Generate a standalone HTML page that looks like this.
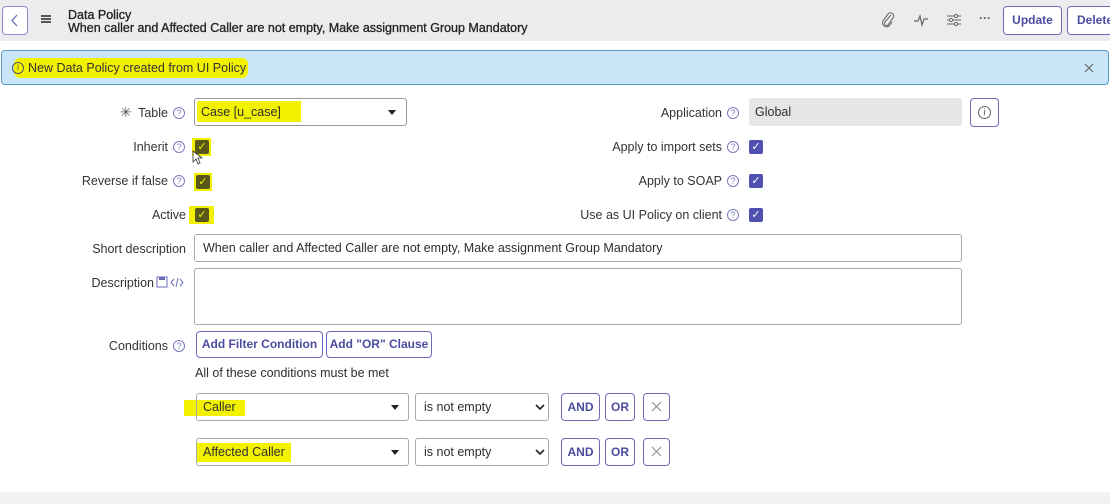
<!DOCTYPE html>
<html><head><meta charset="utf-8"><style>
*{box-sizing:border-box;margin:0;padding:0}
body{width:1110px;height:504px;background:#fff;font-family:"Liberation Sans",sans-serif;font-size:12.5px;color:#2e2e2e;position:relative;overflow:hidden}
.a{position:absolute}
.hdr{left:0;top:0;width:1110px;height:41px;background:#ececee}
.btn{position:absolute;border:1px solid #6b6bb5;border-radius:4px;background:#fff;color:#4b4ba0;font-weight:bold;text-align:center;font-size:12px}
.lbl{position:absolute;text-align:right;font-size:12.5px;color:#333}
.help{position:absolute;width:12px;height:12px;border:1px solid #7c7cc0;border-radius:50%;font-size:9px;color:#7c7cc0;text-align:center;line-height:10px}
.inp{position:absolute;border:1px solid #aaa;border-radius:3px;background:#fff;padding-left:8px;font-size:12.5px}
.cb{position:absolute;width:14px;height:14px;background:#5050b0;border-radius:2px;color:#fff;font-size:11px;text-align:center;line-height:14px}
.cby{position:absolute;background:#f0f000}
.cbd{position:absolute;width:14px;height:14px;background:#58561a;border-radius:2px;color:#f0f000;font-size:11px;text-align:center;line-height:14px}
.hl{background:#f2f200}
.car{position:absolute;width:0;height:0;border-left:4px solid transparent;border-right:4px solid transparent;border-top:5px solid #222}
</style></head><body>
<div class="a hdr"></div>
<div class="btn" style="left:2px;top:6px;width:26px;height:29px;border-color:#8a8acc"><svg width="24" height="27"><path d="M14 8 L9 13.5 L14 19" stroke="#6a6ab8" stroke-width="1.3" fill="none"/></svg></div>
<div class="a" style="left:41px;top:15px;width:10px;height:1.5px;background:#555;box-shadow:0 3px 0 #555,0 6px 0 #555"></div>
<div class="a" style="left:68px;top:8px;font-size:12.5px;color:#222;-webkit-text-stroke:0.3px #222">Data Policy</div>
<div class="a" style="left:68px;top:21px;font-size:12.5px;color:#222;-webkit-text-stroke:0.3px #222">When caller and Affected Caller are not empty, Make assignment Group Mandatory</div>
<svg class="a" style="left:878px;top:10px" width="20" height="20"><path d="M13 5 L7 12 a2 2 0 0 0 3 3 L15 8 a3.2 3.2 0 0 0 -5 -4 L5 11 a4 4 0 0 0 6 5 L14 12" stroke="#777" stroke-width="1.2" fill="none"/></svg>
<svg class="a" style="left:911px;top:10px" width="20" height="20"><path d="M3 11 H7 L9 6 L11 15 L13 9 H17" stroke="#666" stroke-width="1.2" fill="none"/></svg>
<svg class="a" style="left:944px;top:10px" width="20" height="20"><path d="M3 6H17M3 10H17M3 14H17" stroke="#666" stroke-width="1.1"/><circle cx="12" cy="6" r="1.6" fill="#ececee" stroke="#666"/><circle cx="7" cy="10" r="1.6" fill="#ececee" stroke="#666"/><circle cx="12" cy="14" r="1.6" fill="#ececee" stroke="#666"/></svg>
<div class="a" style="left:979px;top:11px;font-size:12px;font-weight:bold;color:#555">···</div>
<div class="btn" style="left:1003px;top:6px;width:59px;height:29px;line-height:27px">Update</div>
<div class="btn" style="left:1067px;top:6px;width:60px;height:29px;line-height:27px;text-align:left;padding-left:9px">Delete</div>

<div class="a" style="left:1px;top:50px;width:1108px;height:35px;background:#c9e6f8;border:1px solid #5b98c4;border-radius:4px"></div>
<div class="a hl" style="left:14px;top:58px;width:234px;height:20px;border-radius:6px"></div>
<div class="a" style="left:12px;top:62px;width:12px;height:12px;border:1px solid #555;border-radius:50%;font-size:8px;text-align:center;line-height:10px;color:#444">i</div>
<div class="a" style="left:28px;top:61px;font-size:12.5px;color:#333">New Data Policy created from UI Policy</div>
<svg class="a" style="left:1083px;top:62px" width="12" height="12"><path d="M2 2L10 10M10 2L2 10" stroke="#666" stroke-width="1.2"/></svg>

<div class="a" style="left:120px;top:104px;font-size:14px;color:#555">✳</div>
<div class="lbl" style="left:100px;top:106px;width:68px">Table</div>
<div class="help" style="left:173px;top:107px">?</div>
<div class="inp" style="left:194px;top:98px;width:213px;height:28px;border-color:#999"></div>
<div class="a hl" style="left:197px;top:101px;width:104px;height:21px"></div>
<div class="a" style="left:201px;top:105px">Case [u_case]</div>
<div class="car" style="left:388px;top:110px"></div>

<div class="lbl" style="left:60px;top:140px;width:108px">Inherit</div>
<div class="help" style="left:173px;top:141px">?</div>
<div class="cby" style="left:192px;top:138px;width:19px;height:18px"></div>
<div class="cbd" style="left:195px;top:140px">✓</div>
<svg class="a" style="left:192px;top:150px" width="12" height="16"><path d="M1 1 L1 12 L4 9 L6 14 L8 13 L6 8 L10 8 Z" fill="#fff" stroke="#333" stroke-width="0.8"/></svg>

<div class="lbl" style="left:40px;top:174px;width:128px">Reverse if false</div>
<div class="help" style="left:173px;top:175px">?</div>
<div class="cby" style="left:194px;top:173px;width:18px;height:18px"></div>
<div class="cbd" style="left:196px;top:175px">✓</div>

<div class="lbl" style="left:60px;top:208px;width:126px">Active</div>
<div class="cby" style="left:189px;top:206px;width:25px;height:18px"></div>
<div class="cbd" style="left:195px;top:208px">✓</div>

<div class="lbl" style="left:40px;top:242px;width:146px">Short description</div>
<div class="inp" style="left:194px;top:234px;width:768px;height:28px;line-height:26px">When caller and Affected Caller are not empty, Make assignment Group Mandatory</div>

<div class="lbl" style="left:40px;top:276px;width:114px">Description</div>
<svg class="a" style="left:156px;top:276px" width="32" height="14"><rect x="1" y="1" width="10" height="10" fill="none" stroke="#6a6ab8"/><rect x="3" y="1" width="6" height="3" fill="#6a6ab8"/><path d="M18 3L15 6.5L18 10M24 3L27 6.5L24 10M22 2L20 11" stroke="#6a6ab8" fill="none"/></svg>
<div class="inp" style="left:194px;top:268px;width:768px;height:57px"></div>

<div class="lbl" style="left:40px;top:339px;width:128px">Conditions</div>
<div class="help" style="left:173px;top:340px">?</div>
<div class="btn" style="left:196px;top:331px;width:127px;height:27px;line-height:25px">Add Filter Condition</div>
<div class="btn" style="left:326px;top:331px;width:106px;height:27px;line-height:25px">Add "OR" Clause</div>
<div class="a" style="left:195px;top:366px">All of these conditions must be met</div>

<div class="a hl" style="left:184px;top:400px;width:61px;height:16px"></div>
<div class="inp" style="left:196px;top:393px;width:213px;height:28px;background:transparent"></div>
<div class="a" style="left:203px;top:400px">Caller</div>
<div class="car" style="left:391px;top:405px"></div>
<div class="inp" style="left:415px;top:393px;width:134px;height:28px;line-height:26px">is not empty</div>
<svg class="a" style="left:535px;top:403px" width="10" height="8"><path d="M1 2L5 6L9 2" stroke="#222" stroke-width="1.6" fill="none"/></svg>
<div class="btn" style="left:561px;top:393px;width:39px;height:28px;line-height:26px">AND</div>
<div class="btn" style="left:605px;top:393px;width:30px;height:28px;line-height:26px">OR</div>
<div class="btn" style="left:643px;top:393px;width:27px;height:28px"><svg width="25" height="26"><path d="M8 8L17 17M17 8L8 17" stroke="#888" stroke-width="1"/></svg></div>

<div class="a hl" style="left:197px;top:443px;width:94px;height:19px"></div>
<div class="inp" style="left:196px;top:438px;width:213px;height:28px;background:transparent"></div>
<div class="a" style="left:203px;top:445px">Affected Caller</div>
<div class="car" style="left:391px;top:450px"></div>
<div class="inp" style="left:415px;top:438px;width:134px;height:28px;line-height:26px">is not empty</div>
<svg class="a" style="left:535px;top:448px" width="10" height="8"><path d="M1 2L5 6L9 2" stroke="#222" stroke-width="1.6" fill="none"/></svg>
<div class="btn" style="left:561px;top:438px;width:39px;height:28px;line-height:26px">AND</div>
<div class="btn" style="left:605px;top:438px;width:30px;height:28px;line-height:26px">OR</div>
<div class="btn" style="left:643px;top:438px;width:27px;height:28px"><svg width="25" height="26"><path d="M8 8L17 17M17 8L8 17" stroke="#888" stroke-width="1"/></svg></div>

<div class="lbl" style="left:560px;top:106px;width:162px">Application</div>
<div class="help" style="left:727px;top:107px">?</div>
<div class="a" style="left:749px;top:98px;width:213px;height:28px;background:#e6e6e8;border-radius:3px;padding:7px 6px">Global</div>
<div class="btn" style="left:970px;top:98px;width:29px;height:29px"><div style="margin:7px auto;width:13px;height:13px;border:1px solid #666;border-radius:50%;font-size:9px;line-height:11px;color:#555;font-weight:normal">i</div></div>

<div class="lbl" style="left:560px;top:140px;width:162px">Apply to import sets</div>
<div class="help" style="left:727px;top:141px">?</div>
<div class="cb" style="left:749px;top:140px">✓</div>
<div class="lbl" style="left:560px;top:174px;width:162px">Apply to SOAP</div>
<div class="help" style="left:727px;top:175px">?</div>
<div class="cb" style="left:749px;top:174px">✓</div>
<div class="lbl" style="left:520px;top:208px;width:202px">Use as UI Policy on client</div>
<div class="help" style="left:727px;top:209px">?</div>
<div class="cb" style="left:749px;top:208px">✓</div>

<div class="a" style="left:0;top:492px;width:1110px;height:12px;background:#f2f2f4"></div>
</body></html>
